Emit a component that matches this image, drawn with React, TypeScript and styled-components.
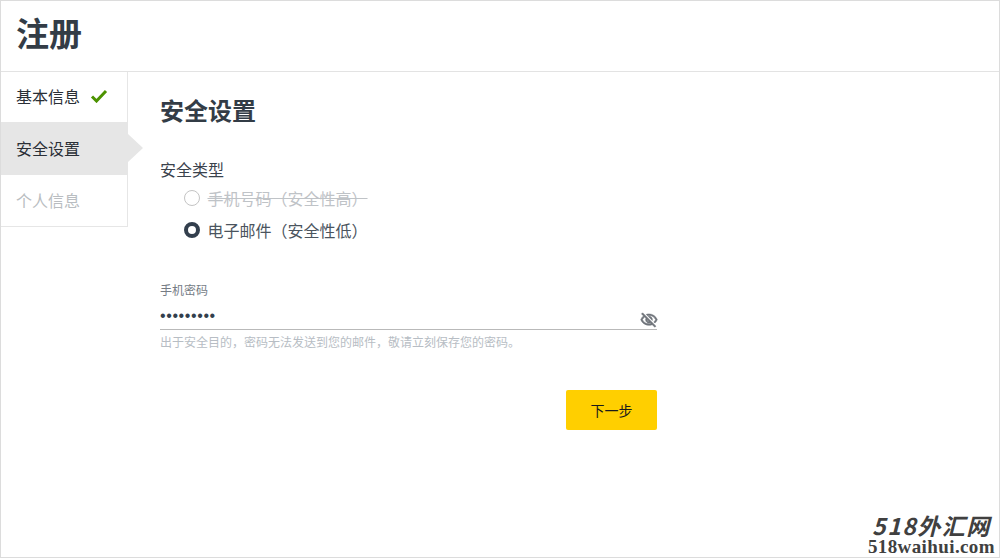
import { createGlobalStyle, styled } from 'styled-components';
import { MdOutlineVisibilityOff } from 'react-icons/md';

const GlobalStyle = createGlobalStyle`
html, body {
  margin: 0;
  padding: 0;
  background: #fff;
  font-family: "Noto Sans CJK SC", "Noto Sans", sans-serif;
}
* { box-sizing: border-box; }
`

const Page = styled.div`
position: relative;
width: 1000px;
height: 558px;
border: 1px solid #dcdcdc;
background: #fff;
overflow: hidden;
`

const Header = styled.header`
height: 71px;
padding: 0 0 9px 15px;
display: flex;
align-items: center;
border-bottom: 1px solid #e3e3e3;
`

const PageTitle = styled.h1`
margin: 0;
font-size: 33px;
line-height: 40px;
font-weight: 700;
color: #333c46;
`

const Body = styled.div`
display: flex;
align-items: flex-start;
`

const Steps = styled.nav`
width: 127px;
flex: none;
border-right: 1px solid #e6e6e6;
border-bottom: 1px solid #e6e6e6;
`

const Step = styled.div<{ $state: 'done' | 'active' | 'todo' }>`
position: relative;
height: ${props => props.$state === 'active' ? '53px' : props.$state === 'done' ? '50px' : '51px'};
padding: 0 0 ${props => props.$state === 'done' ? '3px' : '2px'} 15px;
display: flex;
align-items: center;
gap: 10px;
font-size: 16px;
color: ${props => props.$state === 'todo' ? '#b9bdc1' : '#2a2f36'};
background: ${props => props.$state === 'active' ? '#e6e6e6' : '#fff'};

${props => props.$state === 'active' && `
  &::after {
    content: '';
    position: absolute;
    top: 12px;
    right: -16px;
    border-style: solid;
    border-width: 14px 0 14px 15px;
    border-color: transparent transparent transparent #e6e6e6;
  }
`}
`

const Main = styled.main`
flex: none;
width: 529px;
padding: 22px 0 0 32px;
`

const SectionTitle = styled.h2`
margin: 0;
font-size: 24px;
line-height: 32px;
font-weight: 700;
color: #333c46;
`

const GroupLabel = styled.div`
margin-top: 31px;
font-size: 16px;
line-height: 24px;
color: #3a424c;
`

const RadioList = styled.div`
margin-top: 5px;
padding-left: 24px;
display: flex;
flex-direction: column;
gap: 8px;
`

const RadioRow = styled.div<{ $disabled?: boolean }>`
display: flex;
align-items: center;
gap: 7.5px;
height: 24px;
font-size: 16px;
color: ${props => props.$disabled ? '#bfc3c7' : '#4b545e'};
text-decoration: ${props => props.$disabled ? 'line-through' : 'none'};
`

const RadioMark = styled.span<{ $checked?: boolean }>`
width: 16px;
height: 16px;
flex: none;
border-radius: 50%;
border: ${props => props.$checked ? '4px solid #333f4d' : '1px solid #c4c4c4'};
background: #fff;
`

const Field = styled.div`
margin-top: 39px;
`

const FieldLabel = styled.label`
display: block;
font-size: 12px;
line-height: 18px;
color: #757c85;
`

const InputRow = styled.div`
margin-top: 5px;
height: 26px;
display: flex;
align-items: center;
justify-content: space-between;
border-bottom: 1px solid #b9b9b9;
`

const Dots = styled.span`
font-family: "Liberation Sans", sans-serif;
font-size: 16px;
line-height: 24px;
letter-spacing: 0.6px;
color: #333f4d;
margin-top: -1px;
`

const EyeToggle = styled.span`
display: flex;
color: #6f747a;
font-size: 18px;
margin: 7px -1px 0 0;

svg path:last-child {
  stroke: currentColor;
  stroke-width: 0.8;
}
`

const Hint = styled.div`
margin-top: 3px;
font-size: 12px;
line-height: 18px;
color: #b7bdc4;
`

const Actions = styled.div`
margin-top: 39px;
display: flex;
justify-content: flex-end;
`

const NextButton = styled.button`
width: 91px;
height: 40px;
border: 0;
border-radius: 2px;
background: #ffcf00;
color: #1a1a1a;
font-family: inherit;
font-size: 14px;
`

const Watermark = styled.div`
position: absolute;
right: 4px;
bottom: 2px;
display: flex;
flex-direction: column;
align-items: center;
gap: 2px;
color: #404040;
`

const WatermarkBrand = styled.span`
font-family: "Noto Sans CJK SC", sans-serif;
font-style: italic;
font-weight: 700;
font-size: 23px;
line-height: 22px;
letter-spacing: 1.5px;
`

const WatermarkUrl = styled.span`
font-family: "Liberation Serif", serif;
font-weight: 700;
font-size: 19px;
line-height: 17px;
letter-spacing: 0.4px;
`

function Check() {
  return (
    <svg width="18" height="14" viewBox="0 0 18 14" fill="none">
      <path d="M2 7.5 L6.5 12 L16 2" stroke="#4c9200" strokeWidth="3" />
    </svg>
  )
}

export default function App() {
  return (
    <Page>
      <GlobalStyle />
      <Header>
        <PageTitle>注册</PageTitle>
      </Header>
      <Body>
        <Steps>
          <Step $state="done">基本信息<Check /></Step>
          <Step $state="active">安全设置</Step>
          <Step $state="todo">个人信息</Step>
        </Steps>
        <Main>
          <SectionTitle>安全设置</SectionTitle>
          <GroupLabel>安全类型</GroupLabel>
          <RadioList>
            <RadioRow $disabled><RadioMark />手机号码（安全性高）</RadioRow>
            <RadioRow><RadioMark $checked />电子邮件（安全性低）</RadioRow>
          </RadioList>
          <Field>
            <FieldLabel>手机密码</FieldLabel>
            <InputRow>
              <Dots>•••••••••</Dots>
              <EyeToggle><MdOutlineVisibilityOff /></EyeToggle>
            </InputRow>
            <Hint>出于安全目的，密码无法发送到您的邮件，敬请立刻保存您的密码。</Hint>
          </Field>
          <Actions>
            <NextButton>下一步</NextButton>
          </Actions>
        </Main>
      </Body>
      <Watermark>
        <WatermarkBrand>518外汇网</WatermarkBrand>
        <WatermarkUrl>518waihui.com</WatermarkUrl>
      </Watermark>
    </Page>
  )
}
